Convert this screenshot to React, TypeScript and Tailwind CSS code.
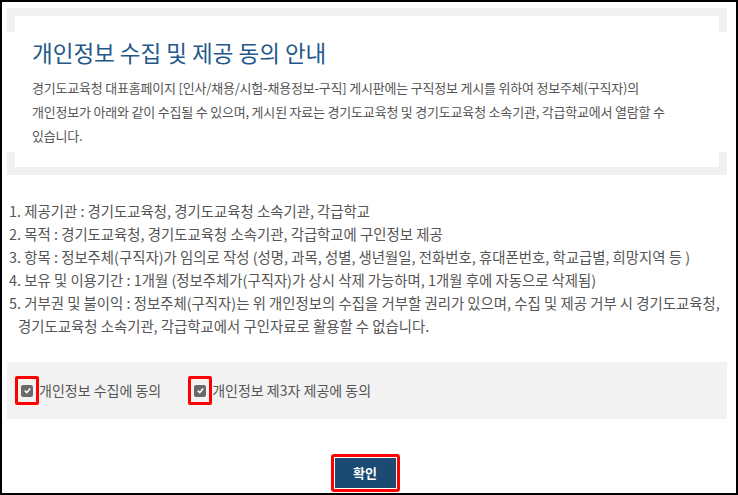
import React from "react";

const font = { fontFamily: '"Noto Sans CJK KR", "Noto Sans", sans-serif' };

function Check() {
  return (
    <span className="flex h-[12px] w-[12px] items-center justify-center rounded-[2px] bg-[#6a6a6a]">
      <svg width="9" height="9" viewBox="0 0 10 10">
        <path d="M2 5.2 L4.2 7.4 L8 2.8" stroke="#fff" strokeWidth="1.8" fill="none" />
      </svg>
    </span>
  );
}

function Side() {
  return (
    <div className="flex w-[8px] flex-col justify-between">
      <div className="h-[16px] bg-[#f0f0f0]" />
      <div className="h-[15px] bg-[#f0f0f0]" />
    </div>
  );
}

export default function App() {
  return (
    <div
      style={font}
      className="h-[495px] w-[738px] overflow-hidden border-2 border-black bg-white pl-[5px] pr-[9px] pt-[6px] text-[#555]"
    >
      <div className="flex h-[167px] w-[720px] flex-col">
        <div className="h-[8px] bg-[#f0f0f0]" />
        <div className="flex flex-1">
          <Side />
          <div className="flex-1 bg-white pl-[17px] pt-[21px]">
            <h1 className="text-[22.5px] leading-[30px] text-[#24588a]">
              개인정보 수집 및 제공 동의 안내
            </h1>
            <p className="mt-[9px] whitespace-nowrap text-[13px] leading-[24px] tracking-[-0.2px]">
              경기도교육청 대표홈페이지 [인사/채용/시험-채용정보-구직] 게시판에는 구직정보 게시를 위하여 정보주체(구직자)의
              <br />
              개인정보가 아래와 같이 수집될 수 있으며, 게시된 자료는 경기도교육청 및 경기도교육청 소속기관, 각급학교에서 열람할 수
              <br />
              있습니다.
            </p>
          </div>
          <Side />
        </div>
        <div className="h-[8px] bg-[#f0f0f0]" />
      </div>

      <div className="mt-[24px] whitespace-nowrap pl-[2px] text-[14.4px] leading-[23px]">
        <div>1. 제공기관 : 경기도교육청, 경기도교육청 소속기관, 각급학교</div>
        <div>2. 목적 : 경기도교육청, 경기도교육청 소속기관, 각급학교에 구인정보 제공</div>
        <div>3. 항목 : 정보주체(구직자)가 임의로 작성 (성명, 과목, 성별, 생년월일, 전화번호, 휴대폰번호, 학교급별, 희망지역 등 )</div>
        <div>4. 보유 및 이용기간 : 1개월 (정보주체가(구직자)가 상시 삭제 가능하며, 1개월 후에 자동으로 삭제됨)</div>
        <div>5. 거부권 및 불이익 : 정보주체(구직자)는 위 개인정보의 수집을 거부할 권리가 있으며, 수집 및 제공 거부 시 경기도교육청,</div>
        <div className="pl-[9px]">경기도교육청 소속기관, 각급학교에서 구인자료로 활용할 수 없습니다.</div>
      </div>

      <div className="mt-[25px] flex h-[57px] w-[720px] items-center bg-[#f2f2f2] pl-[8px] text-[14px]">
        <div className="flex items-center">
          <span className="flex h-[29px] w-[24px] items-center justify-center rounded-[2px] border-[3px] border-[#ff0000]">
            <Check />
          </span>
          <span>개인정보 수집에 동의</span>
        </div>
        <div className="ml-[27px] flex items-center">
          <span className="flex h-[29px] w-[24px] items-center justify-center rounded-[2px] border-[3px] border-[#ff0000]">
            <Check />
          </span>
          <span>개인정보 제3자 제공에 동의</span>
        </div>
      </div>

      <div className="mt-[35px] flex justify-center pr-[4px]">
        <div className="rounded-[3px] border-[3px] border-[#ff0000] p-[1px]">
          <button className="flex h-[30px] w-[61px] items-center justify-center bg-[#1b4a73] text-[13px] font-bold text-white">
            확인
          </button>
        </div>
      </div>
    </div>
  );
}
